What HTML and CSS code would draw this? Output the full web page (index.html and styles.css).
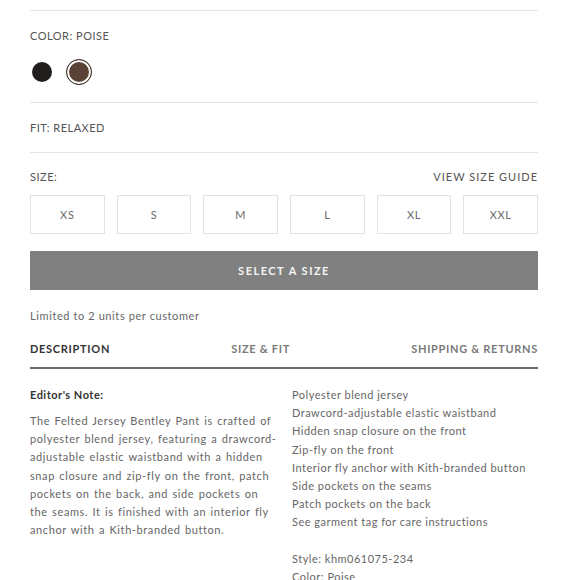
FILE: index.html
```html
<!DOCTYPE html>
<html>
<head>
<meta charset="utf-8">
<link rel="stylesheet" href="styles.css">
</head>
<body>
<div class="page">
  <section class="block block-color">
    <div class="label">COLOR: POISE</div>
    <div class="swatches">
      <span class="swatch swatch-black"></span>
      <span class="swatch swatch-brown selected"></span>
    </div>
  </section>
  <section class="block block-fit">
    <div class="label">FIT: RELAXED</div>
  </section>
  <section class="block block-size">
    <div class="size-head">
      <span class="label">SIZE:</span>
      <span class="label guide">VIEW SIZE GUIDE</span>
    </div>
    <div class="sizes">
      <div class="size">XS</div>
      <div class="size">S</div>
      <div class="size">M</div>
      <div class="size">L</div>
      <div class="size">XL</div>
      <div class="size">XXL</div>
    </div>
    <div class="cta">SELECT A SIZE</div>
    <div class="limit">Limited to 2 units per customer</div>
  </section>
  <nav class="tabs">
    <span class="tab active">DESCRIPTION</span>
    <span class="tab">SIZE &amp; FIT</span>
    <span class="tab">SHIPPING &amp; RETURNS</span>
  </nav>
  <div class="desc">
    <div class="desc-left">
      <div class="note">Editor's Note:</div>
      <p class="para">The Felted Jersey Bentley Pant is crafted of polyester blend jersey, featuring a drawcord-adjustable elastic waistband with a hidden snap closure and zip-fly on the front, patch pockets on the back, and side pockets on the seams. It is finished with an interior fly anchor with a Kith-branded button.</p>
    </div>
    <div class="desc-right">
      <ul class="features">
        <li>Polyester blend jersey</li>
        <li>Drawcord-adjustable elastic waistband</li>
        <li>Hidden snap closure on the front</li>
        <li>Zip-fly on the front</li>
        <li>Interior fly anchor with Kith-branded button</li>
        <li>Side pockets on the seams</li>
        <li>Patch pockets on the back</li>
        <li>See garment tag for care instructions</li>
      </ul>
      <div class="meta">Style: khm061075-234</div>
      <div class="meta">Color: Poise</div>
    </div>
  </div>
</div>
</body>
</html>
```
FILE: styles.css
```css
html, body {
  margin: 0;
  padding: 0;
  background: #ffffff;
}
body {
  font-family: "Lato", "Liberation Sans", sans-serif;
  color: #555;
  overflow: hidden;
  height: 580px;
}
.page {
  width: 508px;
  margin-left: 30px;
  padding-top: 10px;
}
.block {
  border-top: 1px solid #e4e4e4;
}
.label {
  font-size: 11px;
  line-height: 14px;
  letter-spacing: 0.5px;
  color: #555;
}
.label.guide {
  letter-spacing: 1px;
}
.block-color {
  padding: 18px 0 17px;
}
.swatches {
  display: flex;
  align-items: center;
  gap: 14px;
  margin-top: 16px;
  height: 26px;
}
.swatch {
  display: block;
  border-radius: 50%;
  box-sizing: border-box;
}
.swatch-black {
  width: 20px;
  height: 20px;
  background: #221e1d;
  margin-left: 2px;
}
.swatch-brown {
  width: 26px;
  height: 26px;
  background: #5b4236;
  border: 1px solid #3a2d28;
  box-shadow: inset 0 0 0 2px #fff;
}
.block-fit {
  padding: 18px 0 17px;
}
.block-size {
  padding-top: 17px;
}
.size-head {
  display: flex;
  justify-content: space-between;
}
.sizes {
  display: grid;
  grid-template-columns: repeat(6, 1fr);
  gap: 12px;
  margin-top: 11px;
}
.size {
  height: 39px;
  box-sizing: border-box;
  border: 1px solid #e2e2e2;
  display: flex;
  align-items: center;
  justify-content: center;
  font-size: 11px;
  letter-spacing: 0.7px;
  color: #6a6a6a;
}
.cta {
  margin-top: 17px;
  height: 39px;
  background: #808080;
  color: #f4f4f4;
  display: flex;
  align-items: center;
  justify-content: center;
  font-size: 11px;
  font-weight: 700;
  letter-spacing: 1.5px;
}
.limit {
  margin-top: 19px;
  font-size: 11px;
  line-height: 14px;
  letter-spacing: 0.6px;
  color: #666;
}
.tabs {
  margin-top: 19px;
  display: flex;
  justify-content: space-between;
  padding-bottom: 11px;
  border-bottom: 2px solid #6a6a6a;
}
.tab {
  font-size: 11px;
  line-height: 14px;
  font-weight: 700;
  letter-spacing: 0.7px;
  color: #7a7a7a;
}
.tab.active {
  color: #333;
}
.desc {
  display: grid;
  grid-template-columns: 248px 1fr;
  gap: 14px;
  margin-top: 17px;
}
.note {
  font-size: 11px;
  line-height: 18px;
  font-weight: 700;
  letter-spacing: 0.5px;
  color: #333;
}
.para {
  margin: 8px 0 0;
  font-size: 11px;
  line-height: 18.2px;
  letter-spacing: 0.6px;
  word-spacing: 1px;
  color: #666;
}
.features {
  list-style: none;
  margin: 0 0 18.2px;
  padding: 0;
}
.features li, .meta {
  font-size: 11px;
  line-height: 18.2px;
  letter-spacing: 0.5px;
  color: #666;
}
```
